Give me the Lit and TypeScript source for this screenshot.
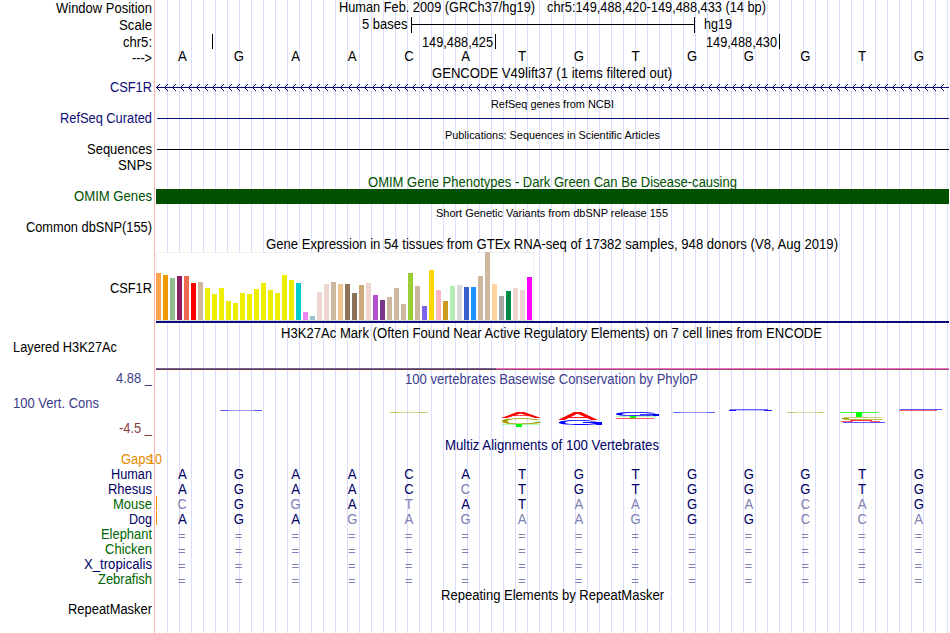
import { LitElement, html, svg, css, type TemplateResult } from "lit";
import { customElement } from "lit/decorators.js";

const LABEL_W = 155;
const VIEW_W = 950;
const NAVY = "#0c0c78";
const DEEP = "#000064";
const GREEN = "#006400";
const FADED = "#8080b4";

type Part = TemplateResult | TemplateResult[];
interface Row { h: number; label?: Part; plot?: Part; }

/* Text set to a measured width: x is the left edge, w the run length. */
const text = (x: number, y: number, w: number, s: string, fill = "#000", size = 14) => svg`
  <text x=${x} y=${y} textLength=${w} lengthAdjust="spacingAndGlyphs" fill=${fill} font-size=${size}>${s}</text>`;
const label = (y: number, w: number, s: string, fill = "#000", right = 152) =>
  text(right - w, y, w, s, fill);
const rect = (x: number, y: number, w: number, h: number, fill: string) => svg`
  <rect x=${x} y=${y} width=${w} height=${h} fill=${fill} shape-rendering="crispEdges"></rect>`;

const baseX = (i: number) => 182.3 + 56.65 * i;
const glyphW: Record<string, number> = { A: 8.8, C: 9.4, G: 10.2, T: 8.2, "=": 7.6 };
/* Lower-case letters mark bases that differ from the human one. */
const bases = (y: number, seq: string, fill: string) =>
  [...seq].map((c, i) => {
    const gap = c === "=";
    const faded = gap || c !== c.toUpperCase();
    const w = glyphW[c.toUpperCase()];
    return text(baseX(i) - w / 2 - (gap ? 0.4 : 0), gap ? y + 1 : y, w, c.toUpperCase(), faded ? FADED : fill, gap ? 13 : 14);
  });

const TAN = "#cdb79e", ROSE = "#eed5d2", YEL = "#eeee00";
const tissues: [number, string][] = [
  [47, "#ffa54f"], [45, "#ee9a00"], [42, "#8fbc8f"], [44, "#8b1c62"], [44, "#ee6a50"], [37, "#ff0000"],
  [38, TAN], [32, YEL], [26, YEL], [32, YEL], [19, YEL], [17, YEL], [27, YEL], [26, YEL], [31, YEL],
  [37, YEL], [30, YEL], [27, YEL], [45, YEL], [40, YEL], [37, "#00cdcd"], [8, "#ee82ee"], [4, "#9ac0cd"],
  [28, ROSE], [36, ROSE], [38, TAN], [36, "#eec591"], [36, "#8b7355"], [27, "#8b7355"], [35, "#cdaa7d"],
  [37, ROSE], [25, "#b452cd"], [20, "#7a378b"], [23, TAN], [32, TAN], [16, TAN], [47, "#9acd32"],
  [34, TAN], [14, "#7a67ee"], [50, "#ffd700"], [30, "#ffb6c1"], [19, "#cd9b1d"], [34, "#b4eeb4"],
  [35, "#d9d9d9"], [33, "#3a5fcd"], [33, "#1e90ff"], [44, TAN], [68, TAN], [36, "#ffd39b"],
  [24, "#a6a6a6"], [29, "#008b45"], [32, ROSE], [30, ROSE], [43, "#ff00ff"],
];

const expression = () => [
  rect(156, 252, 378, 69, "#f0f0f0"),
  rect(157, 253, 376, 67, "#fff"),
  rect(156, 320, 378, 1, "#d8d8d8"),
  ...tissues.map(([h, c], i) => rect(156 + 7 * i, 320 - h, 5, h, c)),
  rect(156, 321, 793, 2, NAVY),
];

const arrows = Array.from({ length: 99 }, (_, i) => {
  const x = 156 + 8 * i;
  return `M${x} 87h1v1h-1zM${x + 1} 86h1v1h-1zM${x + 2} 85h1v1h-1zM${x + 3} 84h1v1h-1zM${x + 1} 88h1v1h-1zM${x + 2} 89h1v1h-1zM${x + 3} 90h1v1h-1z`;
}).join("");

const stroke = (d: string, c: string, w = 1, o = 1) => svg`
  <path d=${d} stroke=${c} stroke-width=${w} stroke-opacity=${o} fill="none"></path>`;
const solid = (d: string, c: string) => svg`<path d=${d} fill=${c}></path>`;
const OLIVE = "#a0a000", BLUE = "#0000ff", RED = "#ff0000", LIME = "#00ff00";

/* Flattened sequence-logo letters, one group per base position. */
const logo = () => [
  stroke("M220 410.5H262", BLUE, 1, 0.4), stroke("M221 410.5H228M254 410.5H262", BLUE, 1, 0.4),
  stroke("M390 412.5H428", OLIVE, 1, 0.4), stroke("M391 412.5H398M419 412.5H426", OLIVE, 1, 0.4),
  solid("M501 418L517 412H524L541 418H535L520.5 413.4L507 418Z", RED), stroke("M511 415.5H531", RED, 1, 0.7),
  solid("M541 420C532 417.5 508 417.5 503 420C500 422 503 424.2 518 424.2C530 424.2 541 424 541.5 421.8L536 421.8C535 423.2 528 423.4 521 423.4C508 423.4 506 422 508 420.4C512 418.6 528 418.7 535 420Z", OLIVE),
  stroke("M502 424.5H540", LIME, 1, 0.3), rect(516, 424, 6, 3, LIME),
  solid("M558 420L574 412H581L598 420H591.5L577.5 413.7L564.5 420Z", RED), stroke("M568 417.5H588", RED, 1, 0.9),
  solid("M598 421.6C589 419.3 565 419.5 560 421.6C556 423.6 563 425 577 425C586 425 592 424.7 595 424.2L597 425H602V422H583V423H595C592 424 586 424.1 579 424.1C566 424.1 563 423 566 421.7C571 420.3 585 420.4 592 421.6Z", BLUE),
  solid("M656 413.4C648 411.6 622 411.7 617 413.3C613 415 620 416 634 416C643 416 649 415.8 652 415.4L654 416H659V414H640V414.8H652C649 415.2 643 415.3 636 415.3C623 415.3 620 414.4 623 413.5C628 412.4 642 412.5 650 413.4Z", BLUE),
  stroke("M615 416.5H657", LIME, 1, 0.3), rect(630, 416, 6, 2, LIME),
  stroke("M616 418.5H654", RED, 1, 0.65),
  stroke("M673 412.5H715", BLUE, 1, 0.4), stroke("M674 412.5H681M707 412.5H715", BLUE, 1, 0.4),
  stroke("M730 409.5H768", BLUE, 1, 0.6), stroke("M729 410.5H736M764 410.5H772", BLUE, 1, 0.9),
  stroke("M736 410.5H764", BLUE, 1, 0.25),
  stroke("M787 412.5H825", OLIVE, 1, 0.35), stroke("M788 412.5H795M818 412.5H824", OLIVE, 1, 0.4),
  stroke("M840 412.5H878", LIME, 1, 0.75), rect(856, 412, 6, 5, LIME),
  stroke("M844 417.5H881", OLIVE, 1, 0.55), stroke("M842 418.5H849", OLIVE, 1.2), stroke("M844 419.5H882", OLIVE, 1, 0.7),
  stroke("M850 420.5H872", RED, 1, 0.8), stroke("M841 421.5H853M870 421.5H880", RED, 1, 0.65),
  stroke("M843 422.5H885", BLUE, 1, 0.65),
  stroke("M900 409.5H942", BLUE, 1, 0.65), stroke("M899 410.5H937", RED, 1, 0.6),
];

const rows: Row[] = [
  { h: 16, label: label(13, 96, "Window Position"), plot: [
    text(339, 12, 196, "Human Feb. 2009 (GRCh37/hg19)"),
    text(547, 12, 219, "chr5:149,488,420-149,488,433 (14 bp)")] },
  { h: 17, label: label(30, 33, "Scale"), plot: [
    text(362, 29, 45.5, "5 bases"), text(704, 29, 28, "hg19"),
    rect(411, 17, 1, 16, "#000"), rect(694, 17, 1, 16, "#000"), rect(411, 24, 284, 1, "#000")] },
  { h: 16, label: label(47, 29, "chr5:"), plot: [
    rect(212, 34, 1, 15, "#000"), rect(495, 34, 1, 15, "#000"), rect(779, 34, 1, 15, "#000"),
    text(422, 47, 71, "149,488,425"), text(706, 47, 71, "149,488,430")] },
  { h: 15, label: label(63, 20, "--->"), plot: bases(61, "AGAACATGTGGGTG", "#000") },
  { h: 16, plot: text(432, 78, 240, "GENCODE V49lift37 (1 items filtered out)") },
  { h: 16, label: label(92, 42, "CSF1R", NAVY), plot: [
    rect(157, 87, 792, 1, NAVY), svg`<path d=${arrows} fill=${NAVY} shape-rendering="crispEdges"></path>`] },
  { h: 16, plot: text(491, 108, 123, "RefSeq genes from NCBI", "#000", 11) },
  { h: 15, label: label(123, 92, "RefSeq Curated", NAVY), plot: rect(157, 118, 792, 1, NAVY) },
  { h: 15, plot: text(445, 139, 215, "Publications: Sequences in Scientific Articles", "#000", 11) },
  { h: 16, label: label(154, 65, "Sequences"), plot: rect(157, 149, 792, 1, "#000") },
  { h: 16, label: label(170, 34, "SNPs") },
  { h: 15, plot: text(368, 187, 369, "OMIM Gene Phenotypes - Dark Green Can Be Disease-causing", "#005000") },
  { h: 15, label: label(201, 78, "OMIM Genes", "#005000"), plot: rect(156, 189, 793, 15, "#005000") },
  { h: 16, plot: text(436, 217, 232, "Short Genetic Variants from dbSNP release 155", "#000", 11) },
  { h: 16, label: label(232, 126, "Common dbSNP(155)") },
  { h: 16, plot: text(266, 249, 572, "Gene Expression in 54 tissues from GTEx RNA-seq of 17382 samples, 948 donors (V8, Aug 2019)") },
  { h: 71, label: label(293, 42, "CSF1R"), plot: expression() },
  { h: 18, plot: text(281, 338, 541, "H3K27Ac Mark (Often Found Near Active Regulatory Elements) on 7 cell lines from ENCODE") },
  { h: 30, label: text(13, 352, 104, "Layered H3K27Ac"), plot: [
    rect(156, 368, 340, 1, "#6464a0"), rect(156, 369, 340, 1, "#783232"),
    rect(496, 368, 453, 1, "#ff64c8"), rect(496, 369, 453, 1, "#825a64")] },
  { h: 16, label: label(383, 36, "4.88 _", "#3c3c8c"),
    plot: text(405, 384, 293, "100 vertebrates Basewise Conservation by PhyloP", "#3c3c8c") },
  { h: 51, label: [text(13, 408, 86, "100 Vert. Cons", "#3c3c8c"), label(433, 33, "-4.5 _", "#8c3c3c")], plot: logo() },
  { h: 16, plot: text(445, 450, 214, "Multiz Alignments of 100 Vertebrates", DEEP) },
  { h: 15, label: label(464, 31, "Gaps", "#e68a00"), plot: text(148, 464, 14, "10", "#e68a00") },
  { h: 15, label: label(479, 41, "Human", DEEP), plot: bases(479, "AGAACATGTGGGTG", DEEP) },
  { h: 15, label: label(494, 44, "Rhesus", DEEP), plot: bases(494, "AGAACcTGTGGGTG", DEEP) },
  { h: 15, label: label(509, 39, "Mouse", GREEN), plot: [rect(156, 496, 1, 14, "#e68a00"), ...bases(509, "cGgAtATaaGacaG", DEEP)] },
  { h: 15, label: label(524, 23, "Dog", DEEP), plot: [rect(156, 511, 1, 14, "#e68a00"), ...bases(524, "AGAgagaagGGcca", DEEP)] },
  { h: 15, label: label(539, 51, "Elephant", GREEN), plot: bases(539, "==============", DEEP) },
  { h: 15, label: label(554, 47, "Chicken", GREEN), plot: bases(554, "==============", DEEP) },
  { h: 15, label: label(569, 68, "X_tropicalis", DEEP), plot: bases(569, "==============", DEEP) },
  { h: 15, label: label(584, 54, "Zebrafish", GREEN), plot: bases(584, "==============", DEEP) },
  { h: 15, plot: text(441, 600, 223, "Repeating Elements by RepeatMasker") },
  { h: 29, label: label(614, 84, "RepeatMasker") },
];

@customElement("app-root")
export class AppRoot extends LitElement {
  static styles = css`
    :host { display: block; width: 950px; height: 633px; overflow: hidden; background: #fff; font-family: "Liberation Sans", Arial, sans-serif; }
    .tracks {
      display: flex; flex-direction: column; width: 950px; height: 633px;
      background:
        linear-gradient(#ffb4b4, #ffb4b4) 154px 0 / 1px 100% no-repeat,
        repeating-linear-gradient(90deg, #dcdcff 0 1px, transparent 1px 12px) 167px 0 / 783px 100% no-repeat;
    }
    .row { display: flex; flex: none; }
    .row svg { display: block; flex: none; overflow: visible; }
    text { white-space: pre; }
  `;

  render() {
    let top = 0;
    return html`<div class="tracks">${rows.map((r) => {
      const y = top;
      top += r.h;
      return html`<div class="row">
        <svg width=${LABEL_W} height=${r.h} viewBox="0 ${y} ${LABEL_W} ${r.h}">${r.label}</svg>
        <svg width=${VIEW_W - LABEL_W} height=${r.h} viewBox="${LABEL_W} ${y} ${VIEW_W - LABEL_W} ${r.h}">${r.plot}</svg>
      </div>`;
    })}</div>`;
  }
}
